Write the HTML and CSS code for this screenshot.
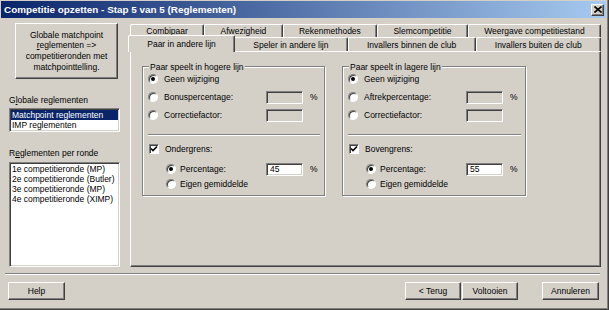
FILE: index.html
```html
<!DOCTYPE html>
<html lang="nl">
<head>
  <meta charset="UTF-8" />
  <title>Competitie opzetten</title>
  <link rel="stylesheet" href="styles.css">
</head>
<body>
  <div class="window">
    <div class="titlebar">
      <span class="title">Competitie opzetten - Stap 5 van 5 (Reglementen)</span>
      <span class="close-btn">
        <svg width="8" height="7" viewBox="0 0 8 7"><path d="M0.5 0.5 L7.5 6.5 M7.5 0.5 L0.5 6.5" stroke="#000" stroke-width="1.6" fill="none"/></svg>
      </span>
    </div>

    <div class="main">
      <div class="sidebar">
        <button class="btn big-btn">Globale matchpoint<br><u>r</u>eglementen =&gt;<br>competitieronden met<br>matchpointtelling.</button>

        <div class="label">G<u>l</u>obale reglementen</div>
        <div class="listbox short">
          <div class="item selected">Matchpoint reglementen</div>
          <div class="item">IMP reglementen</div>
        </div>

        <div class="label">R<u>e</u>glementen per ronde</div>
        <div class="listbox tall">
          <div class="item">1e competitieronde (MP)</div>
          <div class="item">2e competitieronde (Butler)</div>
          <div class="item">3e competitieronde (MP)</div>
          <div class="item">4e competitieronde (XIMP)</div>
        </div>
      </div>

      <div class="tabs">
        <div class="tab-row back">
          <div class="tab">Combipaar</div>
          <div class="tab">Afwezigheid</div>
          <div class="tab">Rekenmethodes</div>
          <div class="tab">Slemcompetitie</div>
          <div class="tab">Weergave competitiestand</div>
        </div>
        <div class="tab-row front">
          <div class="tab active">Paar in andere lijn</div>
          <div class="tab">Speler in andere lijn</div>
          <div class="tab">Invallers binnen de club</div>
          <div class="tab">Invallers buiten de club</div>
        </div>

        <div class="tab-panel">
          <div class="group">
            <div class="group-title"><span>Paar speelt in hogere lijn</span></div>
            <div class="row row-top">
              <div class="opt"><span class="radio checked"></span>Geen wijziging</div>
            </div>
            <div class="row row-field first-field">
              <div class="opt"><span class="radio"></span>Bonuspercentage:</div>
              <span class="field"></span>
              <span class="unit">%</span>
            </div>
            <div class="row row-field">
              <div class="opt"><span class="radio"></span>Correctiefactor:</div>
              <span class="field"></span>
            </div>
            <div class="group-sep"></div>
            <div class="row row-check">
              <div class="opt"><span class="checkbox"><svg width="8" height="8" viewBox="0 0 8 8"><path d="M1 3.5 L3 5.5 L7 1.5" stroke="#000" stroke-width="1.6" fill="none"/></svg></span>Ondergrens:</div>
            </div>
            <div class="row row-sub">
              <div class="opt indent"><span class="radio checked"></span>Percentage:</div>
              <span class="field enabled">45</span>
              <span class="unit">%</span>
            </div>
            <div class="row row-last">
              <div class="opt indent"><span class="radio"></span>Eigen gemiddelde</div>
            </div>
          </div>

          <div class="group">
            <div class="group-title"><span>Paar speelt in lagere lijn</span></div>
            <div class="row row-top">
              <div class="opt"><span class="radio checked"></span>Geen wijziging</div>
            </div>
            <div class="row row-field first-field">
              <div class="opt"><span class="radio"></span>Aftrekpercentage:</div>
              <span class="field"></span>
              <span class="unit">%</span>
            </div>
            <div class="row row-field">
              <div class="opt"><span class="radio"></span>Correctiefactor:</div>
              <span class="field"></span>
            </div>
            <div class="group-sep"></div>
            <div class="row row-check">
              <div class="opt"><span class="checkbox"><svg width="8" height="8" viewBox="0 0 8 8"><path d="M1 3.5 L3 5.5 L7 1.5" stroke="#000" stroke-width="1.6" fill="none"/></svg></span>Bovengrens:</div>
            </div>
            <div class="row row-sub">
              <div class="opt indent"><span class="radio checked"></span>Percentage:</div>
              <span class="field enabled">55</span>
              <span class="unit">%</span>
            </div>
            <div class="row row-last">
              <div class="opt indent"><span class="radio"></span>Eigen gemiddelde</div>
            </div>
          </div>
        </div>
      </div>
    </div>

    <div class="separator"></div>

    <div class="footer">
      <button class="btn footer-btn">Help</button>
      <div class="footer-right">
        <button class="btn footer-btn">&lt; Terug</button>
        <button class="btn footer-btn">Voltooien</button>
        <button class="btn footer-btn cancel">Annuleren</button>
      </div>
    </div>
  </div>
</body>
</html>
```

FILE: styles.css
```css
body {
  margin: 0;
  background: #d4d0c8;
  font-family: "Liberation Sans", Arial, sans-serif;
  font-size: 8.5px;
  color: #000;
}

/* window frame */
.window {
  width: 609px;
  height: 310px;
  box-sizing: border-box;
  padding: 1px 3px 3px 1px;
  box-shadow: inset -1px -1px #404040, inset -2px -2px #808080;
  display: flex;
  flex-direction: column;
}
.titlebar {
  height: 17px;
  flex: none;
  display: flex;
  align-items: center;
  justify-content: space-between;
  padding: 0 2px 0 3px;
  background: linear-gradient(to right, #0a246a, #a6caf0);
}
.title {
  color: white;
  font-weight: bold;
  font-size: 9.9px;
}
.close-btn {
  width: 13px;
  height: 12px;
  box-sizing: border-box;
  background: #d4d0c8;
  border: 1px solid;
  border-color: #fff #404040 #404040 #fff;
  box-shadow: inset -1px -1px #808080;
  display: flex;
  align-items: center;
  justify-content: center;
}

/* raised buttons */
.btn {
  font: inherit;
  color: #000;
  background: #d4d0c8;
  border: 1px solid;
  border-color: #fff #404040 #404040 #fff;
  box-shadow: inset -1px -1px #808080;
  padding: 0;
  box-sizing: border-box;
}

.main {
  height: 249px;
  flex: none;
  display: flex;
  gap: 10px;
  padding: 0 5px 0 8px;
}

/* left column */
.sidebar {
  width: 111px;
  flex: none;
  display: flex;
  flex-direction: column;
}
.big-btn {
  margin: 5px 2px 0 6px;
  height: 56px;
  line-height: 10.7px;
  text-align: center;
}
.label {
  margin-top: 16px;
  line-height: 11px;
}
.listbox {
  box-sizing: border-box;
  background: #fff;
  border: 1px solid;
  border-color: #808080 #fff #fff #808080;
  box-shadow: inset 1px 1px #404040, inset -1px -1px #d4d0c8;
  padding: 1px;
}
.listbox.short {
  margin-top: 2px;
  height: 24px;
}
.listbox.tall {
  margin-top: 3px;
  flex: 1;
}
.item {
  height: 10px;
  line-height: 10px;
  padding-left: 1px;
  white-space: nowrap;
}
.item.selected {
  background: #0a246a;
  color: #fff;
}

/* tab control */
.tabs {
  width: 471px;
  flex: none;
  display: flex;
  flex-direction: column;
  padding-top: 6px;
}
.tab-row {
  display: flex;
  height: 13px;
  flex: none;
}
.tab-row.front {
  height: 14px;
}
.tab {
  flex: 1 1 auto;
  padding: 0 4px;
  display: flex;
  align-items: center;
  justify-content: center;
  white-space: nowrap;
  box-sizing: border-box;
  background: #d4d0c8;
  border-top: 1px solid #fff;
  border-left: 1px solid #fff;
  border-right: 1px solid #404040;
  box-shadow: inset -1px 0 #808080;
  border-radius: 2px 2px 0 0;
}
.tab.active {
  margin: -2px -1px -1px -2px;
  position: relative;
  z-index: 1;
}
.tab-panel {
  flex: 1;
  display: flex;
  align-items: flex-start;
  gap: 17px;
  padding: 14px 0 0 11px;
  border-top: 1px solid #fff;
  border-left: 1px solid #fff;
  border-right: 1px solid #404040;
  border-bottom: 1px solid #404040;
  box-shadow: inset -1px -1px #808080;
}

/* group boxes */
.group {
  width: 183px;
  box-sizing: border-box;
  border: 1px solid #808080;
  box-shadow: inset 1px 1px #fff, 1px 1px #fff;
  padding: 0 4px 4px 5px;
}
.group + .group {
  width: 184px;
}
.group-title {
  margin: -5px 0 0 1px;
  line-height: 10px;
  height: 10px;
}
.group-title span {
  background: #d4d0c8;
  padding: 0 1px;
}
.row {
  display: grid;
  grid-template-columns: 111px 37px auto;
  column-gap: 7px;
  align-items: center;
}
.row-top {
  height: 14px;
}
.row-field {
  height: 18px;
}
.first-field {
  margin-top: 2px;
}
.row-check {
  height: 14px;
  margin-top: 6px;
}
.row-sub {
  height: 16px;
  margin-top: 5px;
}
.row-last {
  height: 14px;
}
.group-sep {
  margin-top: 10px;
  border-top: 1px solid #808080;
  border-bottom: 1px solid #fff;
}
.opt {
  display: flex;
  align-items: center;
  gap: 6px;
  white-space: nowrap;
}
.opt.indent {
  margin-left: 18px;
  gap: 4px;
}
.radio {
  width: 10px;
  height: 10px;
  flex: none;
  box-sizing: border-box;
  border-radius: 50%;
  background: #fff;
  border: 1px solid;
  border-color: #808080 #fff #fff #808080;
  box-shadow: inset 1px 1px #404040;
  position: relative;
}
.radio.checked::after {
  content: "";
  position: absolute;
  left: 2px;
  top: 2px;
  width: 4px;
  height: 4px;
  border-radius: 50%;
  background: #000;
}
.checkbox {
  width: 10px;
  height: 10px;
  flex: none;
  margin-left: 1px;
  box-sizing: border-box;
  background: #fff;
  border: 1px solid;
  border-color: #808080 #fff #fff #808080;
  box-shadow: inset 1px 1px #404040;
  display: flex;
  align-items: center;
  justify-content: center;
}
.field {
  width: 37px;
  height: 13px;
  box-sizing: border-box;
  background: #d4d0c8;
  border: 1px solid;
  border-color: #808080 #fff #fff #808080;
  box-shadow: inset 1px 1px #404040, inset -1px -1px #d4d0c8;
}
.field.enabled {
  background: #fff;
  padding-left: 3px;
  line-height: 11px;
}

/* bottom bar */
.separator {
  flex: none;
  margin: 6px 6px 0 4px;
  border-top: 1px solid #808080;
  border-bottom: 1px solid #fff;
}
.footer {
  flex: none;
  display: flex;
  justify-content: space-between;
  margin-top: 7px;
  padding: 0 7px;
}
.footer-right {
  display: flex;
  gap: 1px;
}
.footer-btn {
  width: 56px;
  height: 18px;
}
.footer > .footer-btn {
  width: 57px;
}
.footer-btn.cancel {
  margin-left: 23px;
  width: 57px;
}
```
